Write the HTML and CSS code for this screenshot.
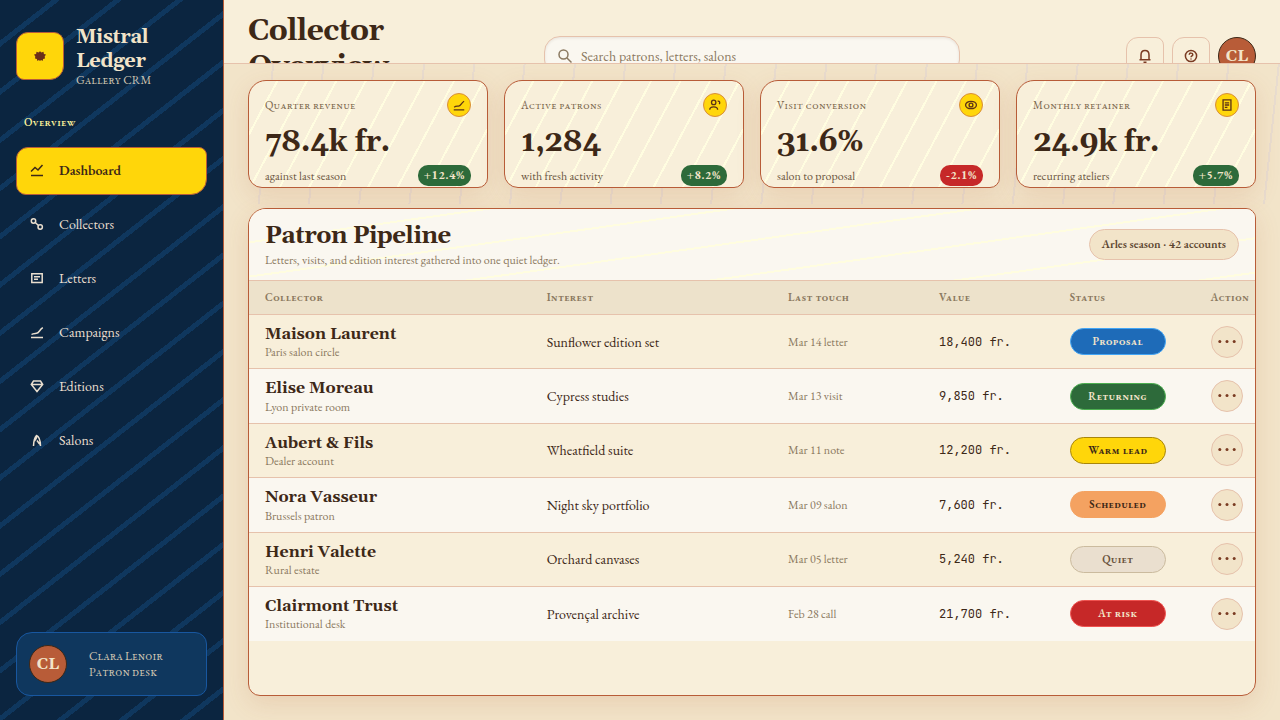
FILE: index.html
```
<!DOCTYPE html>
<html lang="en">
<head>
    <meta charset="UTF-8">
    <meta name="viewport" content="width=device-width, initial-scale=1.0">
    <title>Mistral Ledger - Collector Overview</title>
    <link rel="stylesheet" href="styles.css">
</head>
<body>
    <!-- Icon set -->
    <svg class="icon-set" aria-hidden="true">
        <symbol id="icon-sun" viewBox="0 0 14 14"><path d="M3.500 2.800l2 .6L7 2.200l1.500 1.200 2-.6.4 2.200 2.100.6-1.300 1.900.3 2-1.900.4-.5 2-1.500-.9L7 12l-1.100-1-1.500.9-.5-2-1.900-.4.300-2L1 5.600 3.100 5z" fill="currentColor"/></symbol>
        <symbol id="icon-dashboard" viewBox="0 0 16 16"><path d="M2 9.500l4-4 3 2.500 4.500-5M2 13.500h12"/></symbol>
        <symbol id="icon-collectors" viewBox="0 0 16 16"><circle cx="4.500" cy="5" r="2.200"/><circle cx="11.200" cy="11" r="2.200"/><path d="M6.200 6.500l3.300 3"/></symbol>
        <symbol id="icon-letters" viewBox="0 0 16 16"><path d="M2.800 3.800h10.400v8.800H2.800zM5 6.800h6M5 9.300h4"/></symbol>
        <symbol id="icon-campaigns" viewBox="0 0 16 16"><path d="M2.500 10.500c1.500-1.200 3-1 5-1.200 2.500-.3 3-3.600 6.300-5.600M2 13.500h12"/></symbol>
        <symbol id="icon-editions" viewBox="0 0 16 16"><path d="M4.500 3h7l2.200 3.500L8 13.500 2.300 6.500zM2.500 6.500h11"/></symbol>
        <symbol id="icon-salons" viewBox="0 0 16 16"><path d="M4.500 14c.2-5 .8-8.500 3-10.500 3 1 3.800 5 4 10.500M5.500 9c1-1 2-3 2.500-5M8 8.500c1 1.500 2 3 3.300 4"/></symbol>
        <symbol id="icon-patrons" viewBox="0 0 16 16"><circle cx="6.500" cy="5" r="2.500"/><path d="M2 13.500c0-4.500 9-4.500 9 0M11 3.500c2.500-.3 3 2 1.800 3.500"/></symbol>
        <symbol id="icon-eye" viewBox="0 0 16 16"><ellipse cx="8" cy="8" rx="6.200" ry="4.200"/><circle cx="8" cy="8" r="2.200"/></symbol>
        <symbol id="icon-bill" viewBox="0 0 16 16"><path d="M3.500 2.200h9v11.600h-9zM5.500 5.500h5M5.500 8h5M5.500 10.800h3"/></symbol>
        <symbol id="icon-search" viewBox="0 0 16 16"><circle cx="6.500" cy="6.500" r="4.500"/><path d="M10 10l4.500 4.500"/></symbol>
        <symbol id="icon-bell" viewBox="0 0 16 16"><path d="M4 11.500V7c0-6 8-6 8 0v4.500M2.500 11.800h11M6.500 14.300h3"/></symbol>
        <symbol id="icon-help" viewBox="0 0 16 16"><circle cx="8" cy="8" r="5.600"/><path d="M6.200 6.700c.2-2.200 3.600-2 3.600 0C9.800 8 8 7.800 8 9.300M8 10.400v1"/></symbol>
        <symbol id="icon-more" viewBox="0 0 20 20"><g fill="currentColor" stroke="none"><circle cx="2.800" cy="9.500" r="1.500"/><circle cx="10" cy="9.500" r="1.500"/><circle cx="17.200" cy="9.500" r="1.500"/></g></symbol>
    </svg>

    <div class="app">
        <!-- Sidebar -->
        <aside class="sidebar">
            <div class="brand">
                <div class="brand-mark"><svg class="icon"><use href="#icon-sun"/></svg></div>
                <div>
                    <div class="brand-name">Mistral Ledger</div>
                    <div class="brand-sub">Gallery CRM</div>
                </div>
            </div>
            <div class="nav-label">Overview</div>
            <nav class="nav">
                <a href="#dashboard" class="active"><svg class="icon"><use href="#icon-dashboard"/></svg>Dashboard</a>
                <a href="#collectors"><svg class="icon"><use href="#icon-collectors"/></svg>Collectors</a>
                <a href="#letters"><svg class="icon"><use href="#icon-letters"/></svg>Letters</a>
                <a href="#campaigns"><svg class="icon"><use href="#icon-campaigns"/></svg>Campaigns</a>
                <a href="#editions"><svg class="icon"><use href="#icon-editions"/></svg>Editions</a>
                <a href="#salons"><svg class="icon"><use href="#icon-salons"/></svg>Salons</a>
            </nav>
            <div class="user-card">
                <span class="avatar">CL</span>
                <div class="user-text">Clara Lenoir<br>Patron desk</div>
            </div>
        </aside>

        <div class="main">
            <!-- Top bar -->
            <header class="topbar">
                <h1>Collector Overview</h1>
                <label class="search">
                    <svg class="icon"><use href="#icon-search"/></svg>
                    <input type="search" placeholder="Search patrons, letters, salons" aria-label="Search">
                </label>
                <div class="top-actions">
                    <button type="button" class="icon-button" aria-label="Notifications"><svg class="icon"><use href="#icon-bell"/></svg></button>
                    <button type="button" class="icon-button" aria-label="Help"><svg class="icon"><use href="#icon-help"/></svg></button>
                    <button type="button" class="avatar">CL</button>
                </div>
            </header>

            <main class="content">
                <!-- Key figures -->
                <section class="kpis">
                    <article class="kpi">
                        <div class="kpi-top"><span class="kpi-label">Quarter revenue</span><span class="kpi-icon"><svg class="icon"><use href="#icon-campaigns"/></svg></span></div>
                        <div class="kpi-value">78.4k fr.</div>
                        <div class="kpi-foot"><span>against last season</span><span class="delta">+12.4%</span></div>
                    </article>
                    <article class="kpi">
                        <div class="kpi-top"><span class="kpi-label">Active patrons</span><span class="kpi-icon"><svg class="icon"><use href="#icon-patrons"/></svg></span></div>
                        <div class="kpi-value">1,284</div>
                        <div class="kpi-foot"><span>with fresh activity</span><span class="delta">+8.2%</span></div>
                    </article>
                    <article class="kpi">
                        <div class="kpi-top"><span class="kpi-label">Visit conversion</span><span class="kpi-icon"><svg class="icon"><use href="#icon-eye"/></svg></span></div>
                        <div class="kpi-value">31.6%</div>
                        <div class="kpi-foot"><span>salon to proposal</span><span class="delta down">-2.1%</span></div>
                    </article>
                    <article class="kpi">
                        <div class="kpi-top"><span class="kpi-label">Monthly retainer</span><span class="kpi-icon"><svg class="icon"><use href="#icon-bill"/></svg></span></div>
                        <div class="kpi-value">24.9k fr.</div>
                        <div class="kpi-foot"><span>recurring ateliers</span><span class="delta">+5.7%</span></div>
                    </article>
                </section>

                <!-- Pipeline table -->
                <section class="panel">
                    <div class="panel-head">
                        <div>
                            <h2>Patron Pipeline</h2>
                            <p>Letters, visits, and edition interest gathered into one quiet ledger.</p>
                        </div>
                        <span class="season">Arles season · 42 accounts</span>
                    </div>
                    <table>
                        <colgroup>
                            <col class="col-collector"><col class="col-interest"><col class="col-touch"><col class="col-value"><col class="col-status"><col class="col-action">
                        </colgroup>
                        <thead>
                            <tr><th>Collector</th><th>Interest</th><th>Last touch</th><th>Value</th><th>Status</th><th>Action</th></tr>
                        </thead>
                        <tbody>
                            <tr>
                                <td><div class="name">Maison Laurent</div><div class="note">Paris salon circle</div></td>
                                <td>Sunflower edition set</td>
                                <td class="touch">Mar 14 letter</td>
                                <td class="value">18,400 fr.</td>
                                <td><span class="status proposal">Proposal</span></td>
                                <td><button type="button" class="more" aria-label="More"><svg class="icon"><use href="#icon-more"/></svg></button></td>
                            </tr>
                            <tr>
                                <td><div class="name">Elise Moreau</div><div class="note">Lyon private room</div></td>
                                <td>Cypress studies</td>
                                <td class="touch">Mar 13 visit</td>
                                <td class="value">9,850 fr.</td>
                                <td><span class="status returning">Returning</span></td>
                                <td><button type="button" class="more" aria-label="More"><svg class="icon"><use href="#icon-more"/></svg></button></td>
                            </tr>
                            <tr>
                                <td><div class="name">Aubert &amp; Fils</div><div class="note">Dealer account</div></td>
                                <td>Wheatfield suite</td>
                                <td class="touch">Mar 11 note</td>
                                <td class="value">12,200 fr.</td>
                                <td><span class="status warm">Warm lead</span></td>
                                <td><button type="button" class="more" aria-label="More"><svg class="icon"><use href="#icon-more"/></svg></button></td>
                            </tr>
                            <tr>
                                <td><div class="name">Nora Vasseur</div><div class="note">Brussels patron</div></td>
                                <td>Night sky portfolio</td>
                                <td class="touch">Mar 09 salon</td>
                                <td class="value">7,600 fr.</td>
                                <td><span class="status scheduled">Scheduled</span></td>
                                <td><button type="button" class="more" aria-label="More"><svg class="icon"><use href="#icon-more"/></svg></button></td>
                            </tr>
                            <tr>
                                <td><div class="name">Henri Valette</div><div class="note">Rural estate</div></td>
                                <td>Orchard canvases</td>
                                <td class="touch">Mar 05 letter</td>
                                <td class="value">5,240 fr.</td>
                                <td><span class="status quiet">Quiet</span></td>
                                <td><button type="button" class="more" aria-label="More"><svg class="icon"><use href="#icon-more"/></svg></button></td>
                            </tr>
                            <tr>
                                <td><div class="name">Clairmont Trust</div><div class="note">Institutional desk</div></td>
                                <td>Provençal archive</td>
                                <td class="touch">Feb 28 call</td>
                                <td class="value">21,700 fr.</td>
                                <td><span class="status risk">At risk</span></td>
                                <td><button type="button" class="more" aria-label="More"><svg class="icon"><use href="#icon-more"/></svg></button></td>
                            </tr>
                        </tbody>
                    </table>
                </section>
            </main>
        </div>
    </div>
</body>
</html>
```
FILE: styles.css
```
:root {
    --night: #0b2540;
    --night-soft: #0f375e;
    --cream: #f8efda;
    --sand: #f2e4c9;
    --paper: #faf7f0;
    --ink: #3d2817;
    --muted: #8b7960;
    --rust: #b85c38;
    --line: #e6c2ac;
    --sun: #ffd60a;
    --display: "Gelasio", Georgia, "Liberation Serif", serif;
    --text: "EB Garamond", "Liberation Serif", serif;
    --mono: "JetBrains Mono", "Liberation Mono", monospace;
}
* {
    margin: 0;
    padding: 0;
    box-sizing: border-box;
}
body {
    background-color: var(--sand);
    color: var(--ink);
    font-family: var(--text);
    font-size: 14px;
}
button, input {
    font-family: inherit;
}
.icon-set {
    display: none;
}
.icon {
    display: block;
    width: 16px;
    height: 16px;
    flex-shrink: 0;
    fill: none;
    stroke: currentColor;
    stroke-width: 1.5;
}
.app {
    display: grid;
    grid-template-columns: 224px minmax(0, 1fr);
    min-height: 100vh;
}

/* Sidebar */
.sidebar {
    display: flex;
    flex-direction: column;
    padding: 24px 16px;
    border-right: 1px solid var(--rust);
    background: repeating-linear-gradient(142deg, transparent 0, transparent 32px, var(--night-soft) 32px, var(--night-soft) 37px, transparent 37px, transparent 38px), var(--night);
    color: var(--sand);
}
.brand {
    display: flex;
    align-items: center;
    gap: 12px;
}
.brand-mark {
    display: grid;
    place-items: center;
    width: 48px;
    height: 48px;
    border: 1px solid var(--rust);
    border-radius: 12px 10px 14px 8px;
    background-color: var(--sun);
    color: #6b2f1a;
}
.brand-mark .icon {
    width: 14px;
    height: 14px;
    stroke: none;
}
.brand-name {
    width: 100px;
    padding-top: 1px;
    font: bold 20px/24px var(--display);
    letter-spacing: -0.02em;
}
.brand-sub, .user-text {
    font-size: 12px;
    line-height: 16px;
    font-variant: small-caps;
    color: #cfc5b2;
}
.brand-sub {
    line-height: 15px;
}
.nav-label {
    margin: 26px 8px 16px;
    font-size: 11px;
    font-weight: 500;
    line-height: 17px;
    font-variant: small-caps;
    letter-spacing: 0.02em;
    color: #fff59d;
}
.nav {
    display: grid;
    gap: 6px;
}
.nav a {
    display: flex;
    align-items: center;
    gap: 14px;
    height: 48px;
    padding: 0 12px 2px;
    border: 1px solid transparent;
    color: #eadfcf;
    text-decoration: none;
}
.nav a.active {
    border-color: var(--rust);
    border-radius: 12px 8px 16px 10px;
    background-color: var(--sun);
    color: var(--ink);
    font-weight: 600;
}
.user-card {
    display: flex;
    align-items: center;
    gap: 22px;
    height: 64px;
    margin-top: auto;
    padding: 0 12px;
    border: 1px solid #1857a0;
    border-radius: 16px 12px 10px 14px;
    background-color: var(--night-soft);
}
.avatar {
    display: grid;
    place-items: center;
    width: 38px;
    height: 38px;
    border: 1px solid var(--ink);
    border-radius: 50%;
    background-color: var(--rust);
    color: var(--sand);
    font: bold 16px/20px var(--display);
}

/* Top bar */
.main {
    display: flex;
    flex-direction: column;
}
.topbar {
    display: grid;
    grid-template-columns: 1fr minmax(0, 416px) 1fr;
    align-items: start;
    gap: 24px;
    height: 64px;
    padding: 13px 24px 0;
    overflow: hidden;
    border-bottom: 1px solid var(--line);
    background-color: var(--cream);
}
.topbar h1 {
    font: bold 30px/36px var(--display);
    letter-spacing: -0.02em;
}
.search {
    display: flex;
    align-items: center;
    gap: 8px;
    height: 40px;
    margin-top: 23px;
    padding: 0 12px;
    border: 1px solid var(--line);
    border-radius: 16px;
    background-color: var(--paper);
    box-shadow: inset 0 1px 3px rgba(61, 40, 23, 0.1);
    color: var(--muted);
}
.search input {
    flex: 1;
    min-width: 0;
    border: none;
    outline: none;
    background: none;
    color: var(--ink);
    font-size: 14px;
}
.search input::placeholder {
    color: var(--muted);
}
.top-actions {
    display: flex;
    justify-content: flex-end;
    gap: 8px;
    margin-top: 24px;
}
.icon-button {
    display: grid;
    place-items: center;
    width: 38px;
    height: 38px;
    border: 1px solid var(--line);
    border-radius: 12px 8px 12px 10px;
    background: none;
    color: #7a3b22;
}

/* Content */
.content {
    display: flex;
    flex: 1;
    flex-direction: column;
    gap: 20px;
    padding: 16px 24px 24px;
    background: repeating-linear-gradient(96deg, transparent 0, transparent 48px, #e8dccf 48px, #e8dccf 50px) 0 0 / 100% 140px no-repeat;
}
.kpis {
    display: grid;
    grid-template-columns: repeat(4, minmax(0, 1fr));
    gap: 16px;
}
.kpi {
    height: 108px;
    padding: 12px 16px 0;
    border: 1px solid var(--rust);
    border-radius: 18px 12px 10px 14px;
    background: repeating-linear-gradient(118deg, transparent 0, transparent 24px, #fffde0 24px, #fffde0 26px), var(--cream);
    box-shadow: 0 8px 24px rgba(184, 92, 56, 0.15);
}
.kpi-top, .kpi-foot {
    display: flex;
    align-items: center;
    justify-content: space-between;
}
.kpi-label {
    font-size: 11px;
    font-variant: small-caps;
    letter-spacing: 0.02em;
    color: #7a664c;
}
.kpi-icon {
    display: grid;
    place-items: center;
    width: 24px;
    height: 24px;
    border: 1px solid #d98d3a;
    border-radius: 50%;
    background-color: var(--sun);
    color: #5c3216;
}
.kpi-icon .icon {
    width: 14px;
    height: 14px;
}
.kpi-value {
    margin: 6px 0 4px;
    font: bold 30px/38px var(--display);
    letter-spacing: -0.02em;
}
.kpi-foot {
    font-size: 12px;
    color: #6b5540;
}
.delta {
    padding: 2px 6px;
    border-radius: 10px;
    background-color: #2d6a3a;
    color: var(--sand);
    font-weight: 700;
    line-height: 17px;
    letter-spacing: 0.05em;
}
.delta.down {
    background-color: #c62828;
}

/* Pipeline */
.panel {
    flex: 1;
    overflow: hidden;
    border: 1px solid var(--rust);
    border-radius: 18px 10px 14px 12px;
    background-color: var(--cream);
    box-shadow: 0 8px 24px rgba(184, 92, 56, 0.15);
}
.panel-head {
    display: flex;
    align-items: center;
    justify-content: space-between;
    height: 72px;
    padding: 0 16px;
    border-bottom: 1px solid var(--line);
    background: repeating-linear-gradient(172deg, transparent 0, transparent 32px, #fffde0 32px, #fffde0 34px), var(--paper);
}
.panel-head h2 {
    font: bold 24px/30px var(--display);
    letter-spacing: -0.02em;
}
.panel-head p {
    font-size: 12px;
    line-height: 18px;
    color: var(--muted);
}
.season {
    padding: 0 12px;
    border: 1px solid var(--line);
    border-radius: 16px;
    background-color: var(--sand);
    color: #5c4630;
    font-size: 12px;
    font-weight: 600;
    line-height: 29px;
}
table {
    width: 100%;
    table-layout: fixed;
    border-spacing: 0;
}
.col-collector {
    width: 28%;
}
.col-interest {
    width: 24%;
}
.col-touch {
    width: 15%;
}
.col-value {
    width: 13%;
}
.col-status {
    width: 14%;
}
.col-action {
    width: 6%;
}
th {
    height: 34px;
    padding: 0 0 2px 16px;
    border-bottom: 1px solid var(--line);
    background-color: #ede2cb;
    color: var(--muted);
    font-size: 11px;
    font-weight: 600;
    font-variant: small-caps;
    letter-spacing: 0.02em;
    text-align: left;
}
td {
    padding: 8px 0 8px 16px;
    border-bottom: 1px solid var(--line);
}
tbody tr:nth-child(even) {
    background-color: var(--paper);
}
tbody tr:last-child td {
    border-bottom-color: transparent;
}
.name {
    font: bold 16px/1.4 var(--display);
}
.note {
    font-size: 12px;
    line-height: 15px;
    color: var(--muted);
}
.touch {
    color: var(--muted);
    font-size: 12px;
}
.value {
    font-family: var(--mono);
    font-size: 12px;
}
.status {
    display: block;
    width: 96px;
    border: 1px solid;
    border-radius: 14px;
    font-size: 11px;
    font-weight: 600;
    line-height: 25px;
    font-variant: small-caps;
    letter-spacing: 0.02em;
    text-align: center;
}
.status.proposal {
    border-color: #42a5f5;
    background-color: #1e6bb8;
    color: var(--sand);
}
.status.returning {
    border-color: #4caf50;
    background-color: #2d6a3a;
    color: var(--sand);
}
.status.warm {
    border-color: #a8860b;
    background-color: var(--sun);
    color: var(--ink);
}
.status.scheduled {
    border-color: #f4a261;
    background-color: #f4a261;
    color: var(--ink);
}
.status.quiet {
    border-color: #cbbb9e;
    background-color: #eadfcf;
    color: #6b5540;
}
.status.risk {
    border-color: #ef5350;
    background-color: #c62828;
    color: var(--sand);
}
.more {
    display: grid;
    place-items: center;
    width: 32px;
    height: 32px;
    border: 1px solid var(--line);
    border-radius: 50%;
    background-color: var(--sand);
    color: #7a3b22;
}
.more .icon {
    width: 20px;
    height: 20px;
}
```
